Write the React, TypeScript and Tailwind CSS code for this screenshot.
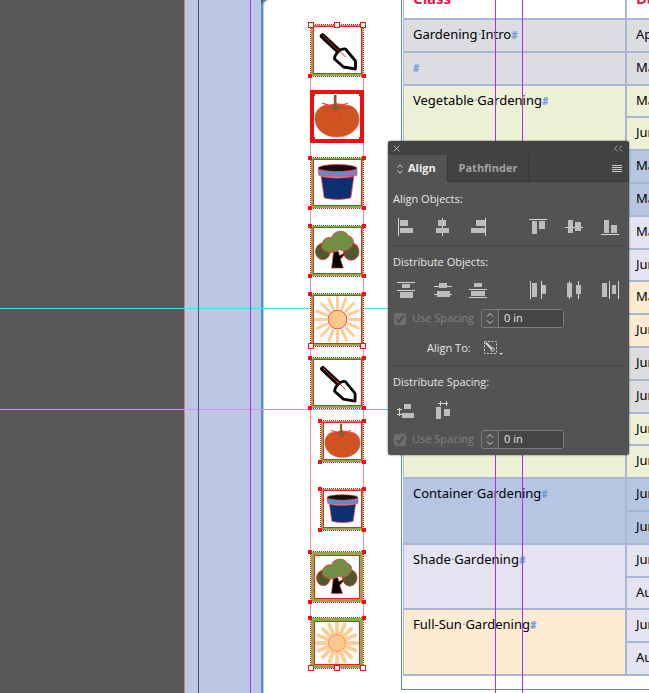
const panelText = "font-['Open_Sans',sans-serif] text-[11px]";

function Trowel() {
  return (
    <svg viewBox="1 3 46 46" className="h-full w-full">
      <path d="M9 12 L25 27" stroke="#000" strokeWidth="5.4" strokeLinecap="round" />
      <path d="M9 11 L31 33" stroke="#ee2222" strokeWidth="1" />
      <path d="M32 25 L42 37 L42 45 L30 43 L21 35 C21 30 27 24 32 25 Z" fill="#fff" stroke="#000" strokeWidth="2.8" strokeLinejoin="round" />
      <path d="M24 25 L32 33" stroke="#ee2222" strokeWidth="1" />
    </svg>
  );
}

function Tomato() {
  return (
    <svg viewBox="3 3 45 44" className="h-full w-full">
      <path d="M4 27 C4 18 11 13 18 14 C22 12 28 12 32 14 C40 13 47 18 47 28 C47 38 37 45 25 45 C13 45 4 37 4 27 Z" fill="#cf5520" stroke="#ee4040" strokeWidth="0.7" />
      <path d="M24 4 C23 8 24 11 24 16" stroke="#7b5a30" strokeWidth="2.6" fill="none" />
      <path d="M24 16 L12 16 M24 16 L36 12 M24 16 L40 17 M24 16 L16 27 M24 16 L22 30 M24 16 L31 29 M24 16 L11 12" stroke="#e23a32" strokeWidth="1.2" />
      <path d="M20 16 L29 16 L26 19 L22 19 Z" fill="#66702c" />
    </svg>
  );
}

function Pot() {
  return (
    <svg viewBox="3 3 44 44" className="h-full w-full">
      <ellipse cx="25" cy="11" rx="19" ry="3.5" fill="#111" stroke="#ee3333" strokeWidth="0.8" />
      <path d="M6 12 C14 15 36 15 44 12 L44 18 C36 20 14 20 7 18 Z" fill="#6689cb" stroke="#ee4444" strokeWidth="0.8" />
      <path d="M9 19 C16 21 34 21 41 19 L38 40 C30 42 20 42 12 40 Z" fill="#0e2f72" stroke="#ee4444" strokeWidth="0.8" />
    </svg>
  );
}

function Tree() {
  return (
    <svg viewBox="2 2 46 46" className="h-full w-full">
      <ellipse cx="10" cy="26" rx="7.5" ry="8.5" fill="#4c5a31" stroke="#ee3333" strokeWidth="0.8" />
      <ellipse cx="39" cy="26" rx="8" ry="9" fill="#4c5a31" stroke="#ee3333" strokeWidth="0.8" />
      <path d="M21 26 L19 43 L31 43 L28 34 L34 27 L27 30 L26 26 Z" fill="#000" stroke="#ee3333" strokeWidth="0.7" />
      <path d="M10 24 C6 17 13 10 19 12 C21 4 33 3 36 10 C42 11 43 19 38 22 C36 26 30 26 27 24 C24 27 15 29 10 24 Z" fill="#708f42" stroke="#ee3333" strokeWidth="0.9" />
    </svg>
  );
}

const sunRays = [0, 22, 45, 67, 90, 112, 135, 157, 180, 202, 225, 247, 270, 292, 315, 337];

function Sun({ bold }: { bold?: boolean }) {
  return (
    <svg viewBox="3 3 44 44" className="h-full w-full">
      {sunRays.map((a) => (
        <path key={a} d="M25 14 L25 4" transform={`rotate(${a} 25 25)`} stroke="#fcce96" strokeWidth={bold ? 4 : 2.8} strokeLinecap="round" />
      ))}
      <circle cx="25" cy="25" r={bold ? 12 : 8.8} fill={bold ? "#fcd09a" : "#fdc88c"} />
      <circle cx="25" cy="25" r="8.8" fill="#fdc88c" stroke="#ee3333" strokeWidth="0.8" strokeDasharray={bold ? "1 1" : undefined} />
    </svg>
  );
}

function Handle({ className, hollow }: { className: string; hollow?: boolean }) {
  return hollow ? (
    <span className={`absolute h-[6px] w-[6px] border border-[#ee1111] bg-white ${className}`} />
  ) : (
    <span className={`absolute h-[4px] w-[4px] bg-[#ee1111] ${className}`} />
  );
}

type FrameProps = {
  className: string;
  children: React.ReactNode;
  hollowTop?: boolean;
  hollowBottom?: boolean;
  thick?: boolean;
  heavy?: boolean;
  midTop?: boolean;
  midBottom?: boolean;
};

function Frame({ className, children, hollowTop, hollowBottom, thick, heavy, midTop, midBottom }: FrameProps) {
  return (
    <div className={`absolute ${className} ${thick ? "border-[4px] border-dotted border-[#ee1111] bg-[#ee1111]" : "border border-dotted border-[#ee1111] bg-white"}`}>
      <div className={`h-full w-full ${thick ? "bg-white" : heavy ? "border-[3px] border-[#8dab4a]" : "border-b-2 border-l-2 border-r border-t border-[#8dab4a]"}`}>
        <div className={`h-full w-full overflow-hidden bg-white ${thick ? "" : "border border-[#ee2020]"}`}>{children}</div>
      </div>
      <Handle hollow={hollowTop} className={hollowTop ? "-left-[3px] -top-[3px]" : "-left-[3px] -top-[2px]"} />
      <Handle hollow={hollowTop} className={hollowTop ? "-right-[3px] -top-[3px]" : "-right-[3px] -top-[2px]"} />
      <Handle hollow={hollowBottom} className={hollowBottom ? "-left-[3px] -bottom-[3px]" : "-left-[3px] -bottom-[2px]"} />
      <Handle hollow={hollowBottom} className={hollowBottom ? "-right-[3px] -bottom-[3px]" : "-right-[3px] -bottom-[2px]"} />
      {midTop && <Handle hollow className="left-[23px] -top-[3px]" />}
      {midBottom && <Handle hollow className="left-[23px] -bottom-[3px]" />}
    </div>
  );
}

function CellText({ words }: { words: string[] }) {
  return (
    <span className="whitespace-nowrap">
      {words.map((w, i) => (
        <span key={w}>
          {i > 0 && <span className="text-[#6f9bd8]">·</span>}
          {w}
        </span>
      ))}
      <span className="text-[10px] font-bold text-[#6f9bd8]">#</span>
    </span>
  );
}

const classRows = [
  { words: ["Gardening", "Intro"], bg: "bg-[#dcdde0]", span: "row-span-1" },
  { words: [], bg: "bg-[#dcdde0]", span: "row-span-1" },
  { words: ["Vegetable", "Gardening"], bg: "bg-[#ecf1d6]", span: "row-span-12" },
  { words: ["Container", "Gardening"], bg: "bg-[#b5c5e2]", span: "row-span-2" },
  { words: ["Shade", "Gardening"], bg: "bg-[#e3e3f1]", span: "row-span-2" },
  { words: ["Full-Sun", "Gardening"], bg: "bg-[#fdecd4]", span: "row-span-2" },
];

const gray = "bg-[#dcdde0]";
const green = "bg-[#ecf1d6]";
const blue = "bg-[#b5c5e2]";
const lav = "bg-[#e3e3f1]";
const orange = "bg-[#fdecd4]";

const dateGroups = [
  [["April", gray]],
  [["May", gray]],
  [["May", green], ["June", green], ["May", blue], ["May", blue], ["May", lav], ["June", lav], ["May", orange], ["June", orange], ["June", gray], ["June", gray], ["June", green], ["June", green]],
  [["June", blue], ["June", blue]],
  [["June", lav], ["August", lav]],
  [["June", lav], ["August", lav]],
];

function ScheduleTable() {
  return (
    <div className="absolute left-[401px] top-0 h-[690px] w-[260px] border-b border-l border-[#5d88c8] bg-white pl-[1px]">
      <div className="grid grid-cols-[223px_1fr] grid-rows-[20px_repeat(20,32.8px)] border-l border-[#a8b6d4] font-['Noto_Sans',sans-serif] text-[13px] text-black">
        <div className="relative overflow-hidden border-b-2 border-r-2 border-[#a8b6d4]">
          <span className="absolute -top-[13px] left-[9px] text-[15px] font-bold text-[#d81f4a]">Class</span>
        </div>
        <div className="relative overflow-hidden border-b-2 border-[#a8b6d4]">
          <span className="absolute -top-[13px] left-[9px] text-[15px] font-bold text-[#d81f4a]">Date</span>
        </div>
        {classRows.map((row, i) => (
          <div key={i} className="contents">
            <div className={`${row.span} ${row.bg} border-b-2 border-r-2 border-[#a8b6d4] pl-[9px] pt-[5px]`}>
              <CellText words={row.words} />
            </div>
            {dateGroups[i].map(([label, bg], j) => (
              <div key={j} className={`${bg} whitespace-nowrap border-b-2 border-[#a8b6d4] pl-[9px] pt-[5px]`}>
                {label}
              </div>
            ))}
          </div>
        ))}
      </div>
    </div>
  );
}

function AlignIcon({ children }: { children: React.ReactNode }) {
  return (
    <svg viewBox="0 0 20 20" className="h-[20px] w-[20px] shrink-0" fill="#bdbdbd">
      {children}
    </svg>
  );
}

function Bar({ x, y, w, h }: { x: number; y: number; w: number; h: number }) {
  return <rect x={x} y={y} width={w} height={h} />;
}

function VLine({ x, y1 = 1, y2 = 19 }: { x: number; y1?: number; y2?: number }) {
  return <rect x={x} y={y1} width="1" height={y2 - y1} fill="#d4d4d4" />;
}

function HLine({ y, x1 = 1, x2 = 19 }: { y: number; x1?: number; x2?: number }) {
  return <rect x={x1} y={y} width={x2 - x1} height="1" fill="#d4d4d4" />;
}

function Divider() {
  return <div className="h-px bg-[#464646]" />;
}

function SpacingRow() {
  return (
    <div className="flex h-[19px] items-center">
      <span className="flex h-[12px] w-[12px] items-center justify-center rounded-[2px] bg-[#6e6e6e]">
        <svg viewBox="0 0 12 12" className="h-[12px] w-[12px]" fill="none">
          <path d="M2.5 6 L5 9 L9.5 2.5" stroke="#4d4d4d" strokeWidth="1.8" />
        </svg>
      </span>
      <span className="ml-[6px] w-[69px] whitespace-nowrap text-[#828282]">Use Spacing</span>
      <div className="flex h-[19px] w-[83px] rounded-[3px] border border-[#7d7d7d]">
        <div className="flex w-[17px] flex-col items-center justify-center gap-[3px] border-r border-[#7d7d7d]">
          <svg viewBox="0 0 8 4" className="h-[4px] w-[8px]" fill="none">
            <path d="M1 3.5 L4 0.5 L7 3.5" stroke="#cfcfcf" />
          </svg>
          <svg viewBox="0 0 8 4" className="h-[4px] w-[8px]" fill="none">
            <path d="M1 0.5 L4 3.5 L7 0.5" stroke="#cfcfcf" />
          </svg>
        </div>
        <div className="flex flex-1 items-center bg-[#454545] pl-[5px] text-[#e6e6e6]">0 in</div>
      </div>
    </div>
  );
}

function AlignPanel() {
  return (
    <div className={`absolute left-[388px] top-[141px] flex h-[314px] w-[241px] flex-col rounded-[3px] bg-[#535353] shadow-[0_0_2px_rgba(0,0,0,0.7)] ${panelText}`}>
      <div className="flex h-[14px] items-center justify-between rounded-t-[3px] bg-[#424242] px-[5px] text-[#a5a5a5]">
        <svg viewBox="0 0 7 7" className="h-[7px] w-[7px]" fill="none">
          <path d="M0.5 0.5 L6.5 6.5 M6.5 0.5 L0.5 6.5" stroke="#b5b5b5" />
        </svg>
        <svg viewBox="0 0 9 7" className="mr-[1px] h-[7px] w-[9px]" fill="none">
          <path d="M3.5 0.5 L0.8 3.5 L3.5 6.5 M8 0.5 L5.3 3.5 L8 6.5" stroke="#a0a0a0" />
        </svg>
      </div>
      <div className="flex h-[27px] bg-[#434343]">
        <div className="flex w-[60px] items-center gap-[5px] border-r border-[#3a3a3a] bg-[#535353] pl-[9px] font-bold text-[#f0f0f0]">
          <svg viewBox="0 0 6 10" className="h-[10px] w-[6px]" fill="none">
            <path d="M0.7 3.5 L3 0.8 L5.3 3.5 M0.7 6.5 L3 9.2 L5.3 6.5" stroke="#d0d0d0" />
          </svg>
          Align
        </div>
        <div className="flex w-[81px] items-center justify-center border-b border-r border-[#3a3a3a] font-bold text-[#a3a3a3]">Pathfinder</div>
        <div className="flex flex-1 items-center justify-end border-b border-[#3a3a3a] pr-[7px]">
          <div className="flex w-[10px] flex-col gap-[1px]">
            <span className="h-px bg-[#cdcdcd]" />
            <span className="h-px bg-[#cdcdcd]" />
            <span className="h-px bg-[#cdcdcd]" />
            <span className="h-px bg-[#cdcdcd]" />
          </div>
        </div>
      </div>
      <div className="px-[5px] text-[#e6e6e6]">
        <div className="mt-[7px] flex h-[20px] items-center">Align Objects:</div>
        <div className="mt-[8px] flex pl-[3px]">
          <div className="flex gap-[16px]">
            <AlignIcon><VLine x={2} /><Bar x={4} y={3} w={8} h={6} /><Bar x={4} y={11} w={13} h={5} /></AlignIcon>
            <AlignIcon><VLine x={10} /><Bar x={6} y={3} w={8} h={6} /><Bar x={4} y={11} w={13} h={5} /></AlignIcon>
            <AlignIcon><VLine x={17} /><Bar x={8} y={3} w={9} h={6} /><Bar x={3} y={11} w={14} h={5} /></AlignIcon>
          </div>
          <div className="ml-[40px] flex gap-[16px]">
            <AlignIcon><HLine y={2} /><Bar x={4} y={4} w={5} h={13} /><Bar x={11} y={4} w={6} h={8} /></AlignIcon>
            <AlignIcon><HLine y={10} /><Bar x={4} y={3} w={5} h={13} /><Bar x={11} y={5} w={6} h={9} /></AlignIcon>
            <AlignIcon><HLine y={17} /><Bar x={4} y={3} w={5} h={13} /><Bar x={11} y={8} w={6} h={8} /></AlignIcon>
          </div>
        </div>
        <div className="mt-[8px]"><Divider /></div>
        <div className="mt-[6px] flex h-[20px] items-center">Distribute Objects:</div>
        <div className="mt-[8px] flex pl-[3px]">
          <div className="flex gap-[16px]">
            <AlignIcon><HLine y={2} /><HLine y={10} /><Bar x={6} y={4} w={8} h={4} /><Bar x={4} y={12} w={13} h={6} /></AlignIcon>
            <AlignIcon><HLine y={6} x1={2} x2={20} /><HLine y={14} x1={2} x2={20} /><Bar x={7} y={3} w={8} h={5} /><Bar x={5} y={11} w={13} h={6} /></AlignIcon>
            <AlignIcon><HLine y={9} /><HLine y={17} /><Bar x={6} y={3} w={8} h={4} /><Bar x={3} y={11} w={14} h={5} /></AlignIcon>
          </div>
          <div className="ml-[40px] flex gap-[16px]">
            <AlignIcon><VLine x={2} /><VLine x={13} /><Bar x={4} y={3} w={5} h={14} /><Bar x={14} y={5} w={4} h={9} /></AlignIcon>
            <AlignIcon><VLine x={5} /><VLine x={14} /><Bar x={3} y={3} w={5} h={14} /><Bar x={12} y={5} w={5} h={9} /></AlignIcon>
            <AlignIcon><VLine x={9} /><VLine x={18} /><Bar x={2} y={3} w={5} h={14} /><Bar x={12} y={5} w={4} h={9} /></AlignIcon>
          </div>
        </div>
        <div className="mt-[9px] pl-[1px]"><SpacingRow /></div>
        <div className="mt-[10px] flex h-[20px] items-center pl-[34px]">
          <span className="w-[56px] whitespace-nowrap">Align To:</span>
          <svg viewBox="0 0 22 16" className="h-[16px] w-[22px]" fill="none">
            <rect x="1.5" y="1.5" width="12" height="12" stroke="#cfcfcf" strokeDasharray="2 1.5" />
            <path d="M3 3 L9 9" stroke="#d8d8d8" strokeWidth="2" />
            <circle cx="9.5" cy="9.5" r="1.7" stroke="#d8d8d8" />
            <path d="M16 13 L20 13 L18 15 Z" fill="#cfcfcf" />
          </svg>
        </div>
        <div className="mt-[7px]"><Divider /></div>
        <div className="mt-[6px] flex h-[20px] items-center">Distribute Spacing:</div>
        <div className="mt-[9px] flex gap-[16px] pl-[3px]">
          <AlignIcon><Bar x={8} y={3} w={7} h={5} /><Bar x={6} y={12} w={12} h={5} /><VLine x={3} y1={7} y2={15} /><HLine y={8} x1={1} x2={6} /><HLine y={13} x1={1} x2={6} /></AlignIcon>
          <AlignIcon><Bar x={4} y={6} w={5} h={12} /><Bar x={12} y={8} w={6} h={7} /><HLine y={2} x1={6} x2={16} /><VLine x={8} y1={0} y2={5} /><VLine x={14} y1={0} y2={5} /></AlignIcon>
        </div>
        <div className="mt-[9px] pl-[1px]"><SpacingRow /></div>
      </div>
    </div>
  );
}

export default function App() {
  return (
    <div className="relative flex h-[693px] w-[649px] overflow-hidden bg-[#585858]">
      <div className="w-[185px] shrink-0 border-r border-[#e9708a]" />
      <div className="w-[76px] shrink-0 bg-[#bac8e4]" />
      <div className="-mt-[2px] h-[700px] flex-1 rounded-tl-[8px] border-l-2 border-t-2 border-[#5d88c8] bg-[#bac8e4]">
        <div className="h-full rounded-tl-[6px] border-l border-[#b9ccec] bg-white" />
      </div>

      {/* guides and frames sit on the canvas */}
      <div className="absolute left-0 top-[308px] h-px w-[649px] bg-[#2ee6f0]" />
      <div className="absolute left-0 top-[409px] h-px w-[649px] bg-[#2ee6f0]" />
      <div className="absolute left-[198px] top-0 h-[693px] w-px bg-[#4f4f4f]" />
      <div className="absolute left-[250px] top-0 h-[693px] w-px bg-[#a92cf0]" />

      <ScheduleTable />
      <div className="absolute left-[495px] top-0 h-[693px] w-px bg-[#a92cf0]" />
      <div className="absolute left-[522px] top-0 h-[693px] w-px bg-[#a92cf0]" />

      <div className="absolute left-[310px] top-[24px] h-[645px] w-[54px] border-x border-[#f48a8a]" />
      <Frame className="left-[310px] top-[24px] h-[53px] w-[54px]" hollowTop midTop><Trowel /></Frame>
      <Frame className="left-[310px] top-[90px] h-[53px] w-[54px]" thick><Tomato /></Frame>
      <Frame className="left-[310px] top-[157px] h-[52px] w-[54px]"><Pot /></Frame>
      <Frame className="left-[310px] top-[225px] h-[52px] w-[54px]"><Tree /></Frame>
      <Frame className="left-[310px] top-[293px] h-[54px] w-[54px]" hollowBottom><Sun /></Frame>
      <Frame className="left-[310px] top-[357px] h-[52px] w-[54px]"><Trowel /></Frame>
      <Frame className="left-[320px] top-[420px] h-[43px] w-[44px]"><Tomato /></Frame>
      <Frame className="left-[320px] top-[488px] h-[43px] w-[44px]"><Pot /></Frame>
      <Frame className="left-[310px] top-[551px] h-[52px] w-[54px]" heavy><Tree /></Frame>
      <Frame className="left-[310px] top-[617px] h-[52px] w-[54px]" heavy hollowBottom midBottom><Sun bold /></Frame>

      <AlignPanel />
    </div>
  );
}
